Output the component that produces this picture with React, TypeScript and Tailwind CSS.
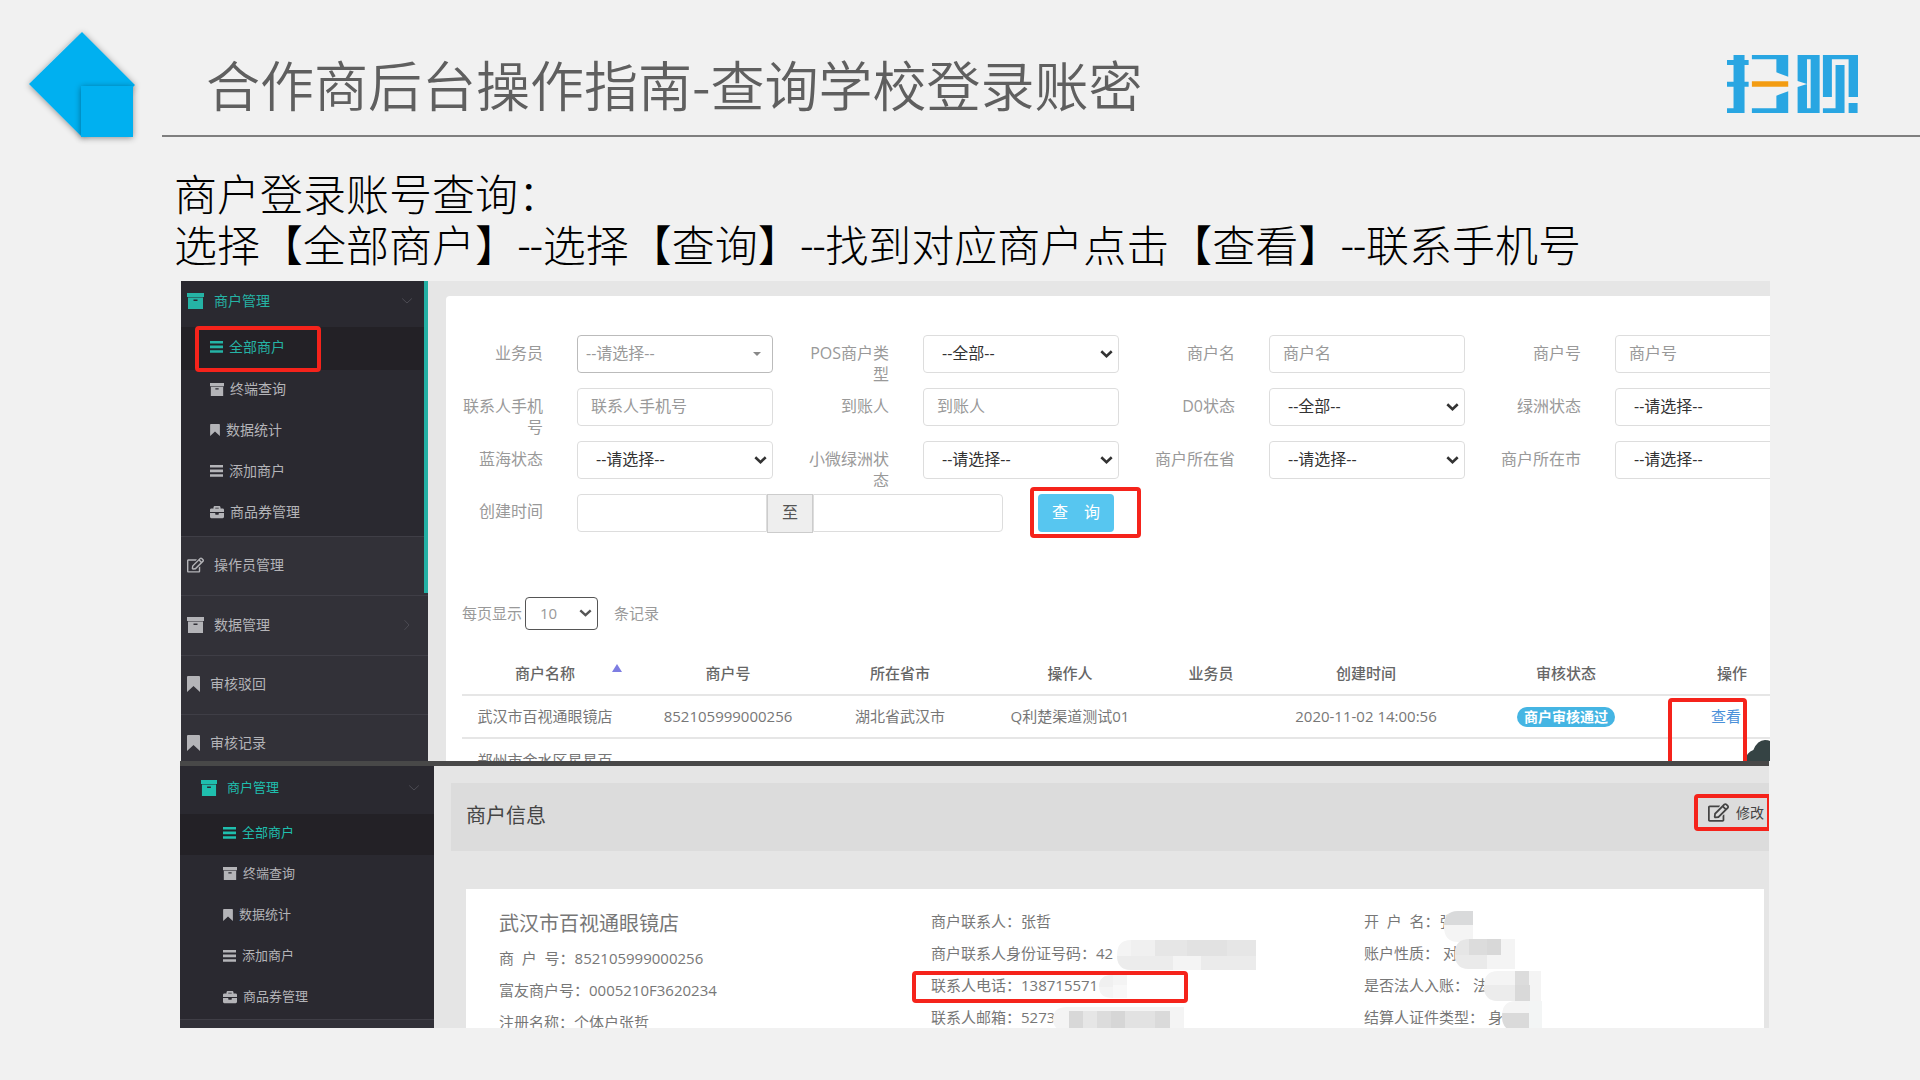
import React from "react";
import { FaBriefcase, FaRegEdit } from "react-icons/fa";

function ArchiveIcon({ className }: { className: string }) {
  return (
    <svg viewBox="0 0 17 16" preserveAspectRatio="none" className={className} fill="currentColor" aria-hidden="true">
      <path d="M0 0H17V4H0Z" />
      <path fillRule="evenodd" d="M1 4.5H16V16H1ZM6.5 6.5V8H10.5V6.5Z" />
    </svg>
  );
}

function BarsIcon({ className }: { className: string }) {
  return (
    <svg viewBox="0 0 13 12" className={className} fill="currentColor" aria-hidden="true">
      <path d="M0 0H13V2.6H0ZM0 4.6H13V7.2H0ZM0 9.2H13V11.8H0Z" />
    </svg>
  );
}

function BookmarkIcon({ className }: { className: string }) {
  return (
    <svg viewBox="0 0 13 16" className={className} fill="currentColor" aria-hidden="true">
      <path d="M1 0H12Q13 0 13 1V16L6.5 10L0 16V1Q0 0 1 0Z" />
    </svg>
  );
}

function Chevron({ className }: { className: string }) {
  return (
    <svg viewBox="0 0 12 8" className={className} fill="none" stroke="currentColor" aria-hidden="true">
      <path d="M1.2 1.5L6 6L10.8 1.5" />
    </svg>
  );
}

function BrandMark() {
  return (
    <svg viewBox="1094 165 321 174" preserveAspectRatio="none" className="h-[58px] w-[131px]" fill="#29a6e2" role="img" aria-label="扫呗">
      <path d="M1110 165H1137V180H1147V195H1137V245H1147V260H1137V339H1094V325H1110V260H1094V245H1110V195H1094V180H1110Z" />
      <path d="M1155 165H1244V230L1215 217V178H1155Z" />
      <path d="M1244 274V339H1155V325H1215V287Z" />
      <path d="M1155 244H1244V260H1155Z" fill="#f39c12" />
      <path fillRule="evenodd" d="M1267 165H1321V339H1267V261L1290 252L1267 243ZM1290 178V325H1299V178Z" />
      <path d="M1329 165H1415V291H1392V178H1351V291H1329Z" />
      <path d="M1360 195H1382V339H1329V325H1360Z" />
      <path d="M1392 309H1414V339H1392Z" />
    </svg>
  );
}

function SlideMark() {
  return (
    <svg viewBox="0 0 162 160" className="h-[160px] w-[162px] shrink-0" aria-hidden="true">
      <defs>
        <filter id="soft" x="-20%" y="-20%" width="140%" height="140%">
          <feDropShadow dx="0" dy="1" stdDeviation="3" floodColor="#000" floodOpacity="0.4" />
        </filter>
      </defs>
      <path d="M82 32L135 85L82 137L29 84Z" fill="#00b0f0" filter="url(#soft)" />
      <path d="M81 86H133V137H81Z" fill="#00b0f0" filter="url(#soft)" />
    </svg>
  );
}

const subItems = [
  { text: "全部商户", icon: "bars" },
  { text: "终端查询", icon: "archive" },
  { text: "数据统计", icon: "bookmark" },
  { text: "添加商户", icon: "bars" },
  { text: "商品券管理", icon: "case" },
];

function SubIcon({ name }: { name: string }) {
  if (name === "bars") return <BarsIcon className="h-3 w-[13px]" />;
  if (name === "archive") return <ArchiveIcon className="h-[13px] w-[14px]" />;
  if (name === "bookmark") return <BookmarkIcon className="h-3 w-[10px]" />;
  return <FaBriefcase className="h-[14px] w-[14px]" />;
}

function UpperSidebar() {
  return (
    <nav className="relative w-[247px] shrink-0 bg-[#323138] text-sm text-[#b4b4b8]">
      <div className="h-[255px] bg-[#2a2930]">
        <a href="#merchant" className="flex h-[46px] items-center gap-2.5 pl-1.5 pr-[15px] pb-1.5 text-[#25b3a5]">
          <ArchiveIcon className="h-4 w-[17px]" />
          <span className="flex-1">商户管理</span>
          <Chevron className="h-2 w-3 text-[#4c4b53]" />
        </a>
        {subItems.map((item, i) => (
          <a
            key={item.text}
            href="#sub"
            className={
              i === 0
                ? "relative flex h-[43px] items-center gap-1.5 bg-[#232126] pl-[29px] pb-1 text-[#25b3a5]"
                : "flex h-[41px] items-center gap-1.5 pl-[29px] pb-[3px]"
            }
          >
            <SubIcon name={item.icon} />
            {item.text}
            {i === 0 && (
              <span className="absolute -top-px left-3.5 h-[46px] w-[126px] rounded border-4 border-[#f5231b]" />
            )}
          </a>
        ))}
      </div>
      <a href="#operator" className="flex h-[59px] items-center gap-2.5 border-t border-[#3f3e46] pl-1.5 pb-0.5">
        <FaRegEdit className="h-4 w-[17px]" />
        操作员管理
      </a>
      <a href="#data" className="flex h-[60px] items-center gap-2.5 border-t border-[#3f3e46] pl-1.5 pr-[15px] pb-0.5">
        <ArchiveIcon className="h-4 w-[17px]" />
        <span className="flex-1">数据管理</span>
        <Chevron className="h-2 w-3 -rotate-90 text-[#4c4b53]" />
      </a>
      <a href="#rejected" className="flex h-[59px] items-center gap-2.5 border-t border-[#3f3e46] pl-1.5 pb-0.5">
        <BookmarkIcon className="h-4 w-[13px]" />
        审核驳回
      </a>
      <a href="#records" className="flex h-[59px] items-center gap-2.5 border-t border-[#3f3e46] pl-1.5 pb-0.5">
        <BookmarkIcon className="h-4 w-[13px]" />
        审核记录
      </a>
      <span className="absolute right-0 top-0 h-[312px] w-1 bg-[#23b0a4]" />
    </nav>
  );
}

function LowerSidebar() {
  return (
    <nav className="w-[254px] shrink-0 bg-[#323138] text-[13px] text-[#b4b4b8]">
      <div className="border-b border-[#3f3e46] bg-[#2a2930]">
        <a href="#merchant-detail" className="flex h-[48px] items-center gap-2.5 pl-[21px] pr-[14px] pb-1 text-[#1fbfae]">
          <ArchiveIcon className="h-4 w-4" />
          <span className="flex-1">商户管理</span>
          <Chevron className="h-2 w-3 text-[#4c4b53]" />
        </a>
        {subItems.map((item, i) => (
          <a
            key={item.text}
            href="#sub-detail"
            className={
              i === 0
                ? "flex h-[41px] items-center gap-1.5 bg-[#232126] pl-[43px] pb-[3px] text-[#1fbfae]"
                : "flex h-[41px] items-center gap-1.5 pl-[43px] pb-1"
            }
          >
            <SubIcon name={item.icon} />
            {item.text}
          </a>
        ))}
      </div>
    </nav>
  );
}

type Field = { label: string; kind: "input" | "select" | "combo"; value: string };

const fields: Field[] = [
  { label: "业务员", kind: "combo", value: "--请选择--" },
  { label: "POS商户类型", kind: "select", value: "--全部--" },
  { label: "商户名", kind: "input", value: "商户名" },
  { label: "商户号", kind: "input", value: "商户号" },
  { label: "联系人手机号", kind: "input", value: "联系人手机号" },
  { label: "到账人", kind: "input", value: "到账人" },
  { label: "D0状态", kind: "select", value: "--全部--" },
  { label: "绿洲状态", kind: "select", value: "--请选择--" },
  { label: "蓝海状态", kind: "select", value: "--请选择--" },
  { label: "小微绿洲状态", kind: "select", value: "--请选择--" },
  { label: "商户所在省", kind: "select", value: "--请选择--" },
  { label: "商户所在市", kind: "select", value: "--请选择--" },
];

function FormField({ field, id }: { field: Field; id: string }) {
  return (
    <div className="flex h-[53px] items-start">
      <label htmlFor={id} className="w-[81px] shrink-0 pt-2 text-right leading-[21px] text-[#999]">
        {field.label}
      </label>
      <div className="relative ml-[34px] w-[196px]">
        {field.kind === "input" && (
          <input
            id={id}
            placeholder={field.value}
            className="h-[38px] w-full rounded border border-[#ddd] bg-white pb-0.5 pl-[13px] placeholder:text-[#999]"
          />
        )}
        {field.kind === "select" && (
          <>
            <select id={id} className="h-[38px] w-full appearance-none rounded border border-[#ddd] bg-white pb-0.5 pl-[18px] text-[#333]">
              <option>{field.value}</option>
            </select>
            <Chevron className="pointer-events-none absolute right-1.5 top-3.5 h-2.5 w-[13px] stroke-[2.4] text-[#333]" />
          </>
        )}
        {field.kind === "combo" && (
          <>
            <select id={id} className="h-[38px] w-full appearance-none rounded border border-[#bbb] bg-white pb-0.5 pl-2 text-[#999]">
              <option>{field.value}</option>
            </select>
            <svg viewBox="0 0 10 5" className="pointer-events-none absolute right-3 top-[17px] h-1 w-2" fill="#888" aria-hidden="true">
              <path d="M0 0H10L5 5Z" />
            </svg>
          </>
        )}
      </div>
    </div>
  );
}

function Badge() {
  return (
    <span className="inline-block h-5 rounded-full bg-[#45b5e3] px-[7px] align-middle text-sm font-bold leading-5 text-white">
      商户审核通过
    </span>
  );
}

function MerchantTable() {
  return (
    <table className="mt-[22px] w-[1348px] table-fixed border-collapse text-center text-[15px] leading-[21px] text-[#777]">
      <colgroup>
        <col className="w-[166px]" />
        <col className="w-[200px]" />
        <col className="w-[144px]" />
        <col className="w-[196px]" />
        <col className="w-[86px]" />
        <col className="w-[224px]" />
        <col className="w-[176px]" />
        <col className="w-[156px]" />
      </colgroup>
      <thead>
        <tr className="h-[43px] border-b-2 border-[#e6e6e6] text-[#666]">
          <th className="relative font-medium">
            商户名称
            <svg viewBox="0 0 10 8" className="absolute right-1.5 top-3 h-2 w-2.5" fill="#7d7de2" aria-hidden="true">
              <path d="M5 0L10 8H0Z" />
            </svg>
          </th>
          <th className="font-medium">商户号</th>
          <th className="font-medium">所在省市</th>
          <th className="font-medium">操作人</th>
          <th className="font-medium">业务员</th>
          <th className="font-medium">创建时间</th>
          <th className="font-medium">审核状态</th>
          <th className="font-medium">操作</th>
        </tr>
      </thead>
      <tbody>
        <tr className="h-[43px] border-b-2 border-[#e6e6e6]">
          <td>武汉市百视通眼镜店</td>
          <td>852105999000256</td>
          <td>湖北省武汉市</td>
          <td>Q利楚渠道测试01</td>
          <td />
          <td>2020-11-02 14:00:56</td>
          <td>
            <Badge />
          </td>
          <td className="relative">
            <a href="#view" className="mr-3 text-[#4a90d9]">查看</a>
            <span className="absolute left-3.5 top-0.5 z-10 h-[90px] w-[79px] rounded border-4 border-[#f5231b]" />
          </td>
        </tr>
        <tr className="h-[64px]">
          <td className="px-3.5">郑州市金水区星星百货商店</td>
          <td />
          <td />
          <td />
          <td />
          <td />
          <td>
            <Badge />
          </td>
          <td />
        </tr>
      </tbody>
    </table>
  );
}

function UpperShot() {
  return (
    <section className="relative ml-px flex h-[480px] overflow-hidden bg-[#e6e6e6]">
      <UpperSidebar />
      <div className="ml-[18px] mt-[15px] min-w-0 flex-1 overflow-hidden rounded-tl bg-white pl-4 pt-[39px]">
        <form className="text-base">
          <div className="grid grid-cols-[repeat(4,346px)]">
            {fields.map((field, i) => (
              <FormField key={field.label} field={field} id={`field-${i}`} />
            ))}
          </div>
          <div className="flex h-[53px] items-start">
            <label htmlFor="date-from" className="w-[81px] shrink-0 pt-[7px] text-right leading-[21px] text-[#999]">
              创建时间
            </label>
            <input id="date-from" className="ml-[34px] h-[38px] w-[190px] rounded-l border border-[#ddd]" />
            <span className="flex h-[39px] w-[46px] items-center justify-center border border-[#ccc] bg-[#eee] pb-[3px] text-[#555]">至</span>
            <input aria-label="结束时间" className="h-[38px] w-[190px] rounded-r border border-[#ddd]" />
            <div className="relative ml-[35px]">
              <button type="button" className="flex h-[38px] w-[76px] items-center justify-center gap-4 rounded bg-[#57c6f0] pb-[3px] text-white">
                <span>查</span>
                <span>询</span>
              </button>
              <span className="pointer-events-none absolute -left-2 -top-[7px] h-[51px] w-[111px] rounded border-4 border-[#f5231b]" />
            </div>
          </div>
        </form>
        <div className="mt-[50px] flex h-[33px] items-center text-[15px] text-[#999]">
          <label htmlFor="page-size">每页显示</label>
          <div className="relative ml-[3px] mr-4">
            <select id="page-size" className="h-[33px] w-[73px] appearance-none rounded-sm border border-[#555] bg-white pl-3.5">
              <option>10</option>
            </select>
            <Chevron className="pointer-events-none absolute right-1.5 top-[11px] h-2.5 w-[13px] stroke-[2.2] text-[#555]" />
          </div>
          条记录
        </div>
        <MerchantTable />
      </div>
      <svg viewBox="0 0 30 21" preserveAspectRatio="none" className="absolute bottom-0 right-0 h-[21px] w-[25px]" fill="#354344" aria-hidden="true">
        <path d="M0 21Q2 12 10 10Q15 0 24 0Q28 0 30 1V21Z" />
      </svg>
    </section>
  );
}

type Tile = [number, number, number, number, string];

function Mosaic({ w, h, tiles, className }: { w: number; h: number; tiles: Tile[]; className: string }) {
  const id = React.useId();
  return (
    <svg viewBox={`0 0 ${w} ${h}`} className={className} aria-hidden="true">
      <clipPath id={id}>
        <path d={`M14 0H${w}V${h}H14Q0 ${h} 0 ${h / 2}Q0 0 14 0Z`} />
      </clipPath>
      <g clipPath={`url(#${id})`}>
        <rect width={w} height={h} fill="#f4f4f4" />
        {tiles.map(([x, y, tw, th, fill], i) => (
          <rect key={i} x={x} y={y} width={tw} height={th} fill={fill} />
        ))}
      </g>
    </svg>
  );
}

function LowerShot() {
  return (
    <section className="mr-px flex h-[262px] overflow-hidden bg-[#e5e5e5]">
      <LowerSidebar />
      <div className="min-w-0 flex-1 pt-[17px]">
        <div className="ml-[17px] flex h-[68px] items-start bg-[#dcdcdc] pl-[15px] pt-[11px]">
          <h2 className="flex-1 pt-2 text-xl text-[#444]">商户信息</h2>
          <button
            type="button"
            className="flex h-[37px] w-[75px] items-center gap-[7px] rounded-l border-4 border-r-2 border-[#f5231b] pl-2.5 text-sm text-[#444]"
          >
            <FaRegEdit className="h-[19px] w-[21px] shrink-0" />
            <span className="shrink-0">修改</span>
          </button>
        </div>
        <div className="ml-8 mr-[5px] mt-[38px] grid h-[160px] grid-cols-[432px_433px_1fr] bg-white pl-[33px] pt-4 text-[15px] leading-8 text-[#777]">
          <div>
            <h3 className="pt-px text-xl leading-9">武汉市百视通眼镜店</h3>
            <p className="whitespace-pre">商 &nbsp;户 &nbsp;号：852105999000256</p>
            <p>富友商户号：0005210F3620234</p>
            <p>注册名称：个体户张哲</p>
          </div>
          <div>
            <p>商户联系人：张哲</p>
            <p className="relative">
              商户联系人身份证号码：42
              <Mosaic
                w={139}
                h={30}
                className="absolute left-[186px] top-[3px] h-[30px] w-[139px]"
                tiles={[
                  [14, 0, 24, 16, "#f0f0f0"],
                  [38, 0, 32, 16, "#e6e6e6"],
                  [70, 0, 40, 16, "#e2e2e2"],
                  [110, 0, 29, 16, "#e6e6e6"],
                  [0, 16, 56, 14, "#ececec"],
                  [84, 16, 55, 14, "#ebebeb"],
                ]}
              />
            </p>
            <p className="relative">
              联系人电话：138715571
              <Mosaic
                w={28}
                h={23}
                className="absolute left-[168px] top-1.5 h-[23px] w-7"
                tiles={[
                  [0, 0, 14, 12, "#f0f0f0"],
                  [14, 10, 14, 13, "#f8f8f8"],
                ]}
              />
              <span className="absolute -left-[19px] top-0.5 h-8 w-[276px] rounded border-4 border-[#f5231b]" />
            </p>
            <p className="relative">
              联系人邮箱：5273
              <Mosaic
                w={131}
                h={24}
                className="absolute left-[122px] top-1.5 h-6 w-[131px]"
                tiles={[
                  [16, 4, 14, 20, "#d8d8d8"],
                  [30, 4, 14, 20, "#e6e6e6"],
                  [44, 4, 14, 20, "#dcdcdc"],
                  [58, 4, 14, 20, "#d6d6d6"],
                  [72, 4, 30, 20, "#e2e2e2"],
                  [102, 4, 15, 20, "#dadada"],
                ]}
              />
            </p>
          </div>
          <div>
            <p className="relative whitespace-pre">
              开 &nbsp;户 &nbsp;名：张
              <Mosaic
                w={29}
                h={31}
                className="absolute left-20 top-1.5 h-[31px] w-[29px]"
                tiles={[[0, 0, 29, 14, "#d9dadb"]]}
              />
            </p>
            <p className="relative">
              账户性质： 对
              <Mosaic
                w={60}
                h={30}
                className="absolute left-[91px] top-0.5 h-[30px] w-[60px]"
                tiles={[
                  [0, 0, 14, 16, "#e6e6e6"],
                  [14, 0, 18, 16, "#dcdcdc"],
                  [32, 0, 14, 16, "#d8d8d8"],
                  [0, 16, 32, 14, "#eaeaea"],
                ]}
              />
            </p>
            <p className="relative">
              是否法人入账： 法
              <Mosaic
                w={57}
                h={30}
                className="absolute left-[120px] top-0.5 h-[30px] w-[57px]"
                tiles={[
                  [31, 0, 14, 14, "#dcdcdc"],
                  [0, 14, 31, 16, "#ececec"],
                  [31, 14, 15, 16, "#d9d9d9"],
                ]}
              />
            </p>
            <p className="relative">
              结算人证件类型： 身
              <Mosaic
                w={40}
                h={30}
                className="absolute left-[138px] top-0 h-[30px] w-10"
                tiles={[
                  [0, 12, 27, 18, "#dadada"],
                  [27, 0, 13, 30, "#f3f5f5"],
                ]}
              />
            </p>
          </div>
        </div>
      </div>
    </section>
  );
}

export default function App() {
  return (
    <main className='min-h-screen overflow-hidden bg-[#f1f1f1] pb-13 font-["Open_Sans","Noto_Sans_CJK_SC",sans-serif]'>
      <header className="flex h-[137px]">
        <SlideMark />
        <div className="flex flex-1 items-start border-b-2 border-[#7f7f7f] pl-11 pr-[62px] pt-12">
          <h1 className='flex-1 font-["Noto_Sans_CJK_SC",sans-serif] text-[54px] font-[350] leading-[72px] text-[#5f5f5f]'>
            合作商后台操作指南-查询学校登录账密
          </h1>
          <div className="pt-[7px]">
            <BrandMark />
          </div>
        </div>
      </header>
      <p className='ml-[174px] mt-[34px] font-["Roboto","Noto_Sans_CJK_SC",sans-serif] text-[43px] font-light leading-[51px] text-black'>
        商户登录账号查询：
        <br />
        选择【全部商户】--选择【查询】--找到对应商户点击【查看】--联系手机号
      </p>
      <div className="ml-[180px] mr-[150px] mt-2">
        <UpperShot />
        <div className="mr-px h-[5px] bg-[#484848]" />
        <LowerShot />
      </div>
    </main>
  );
}
